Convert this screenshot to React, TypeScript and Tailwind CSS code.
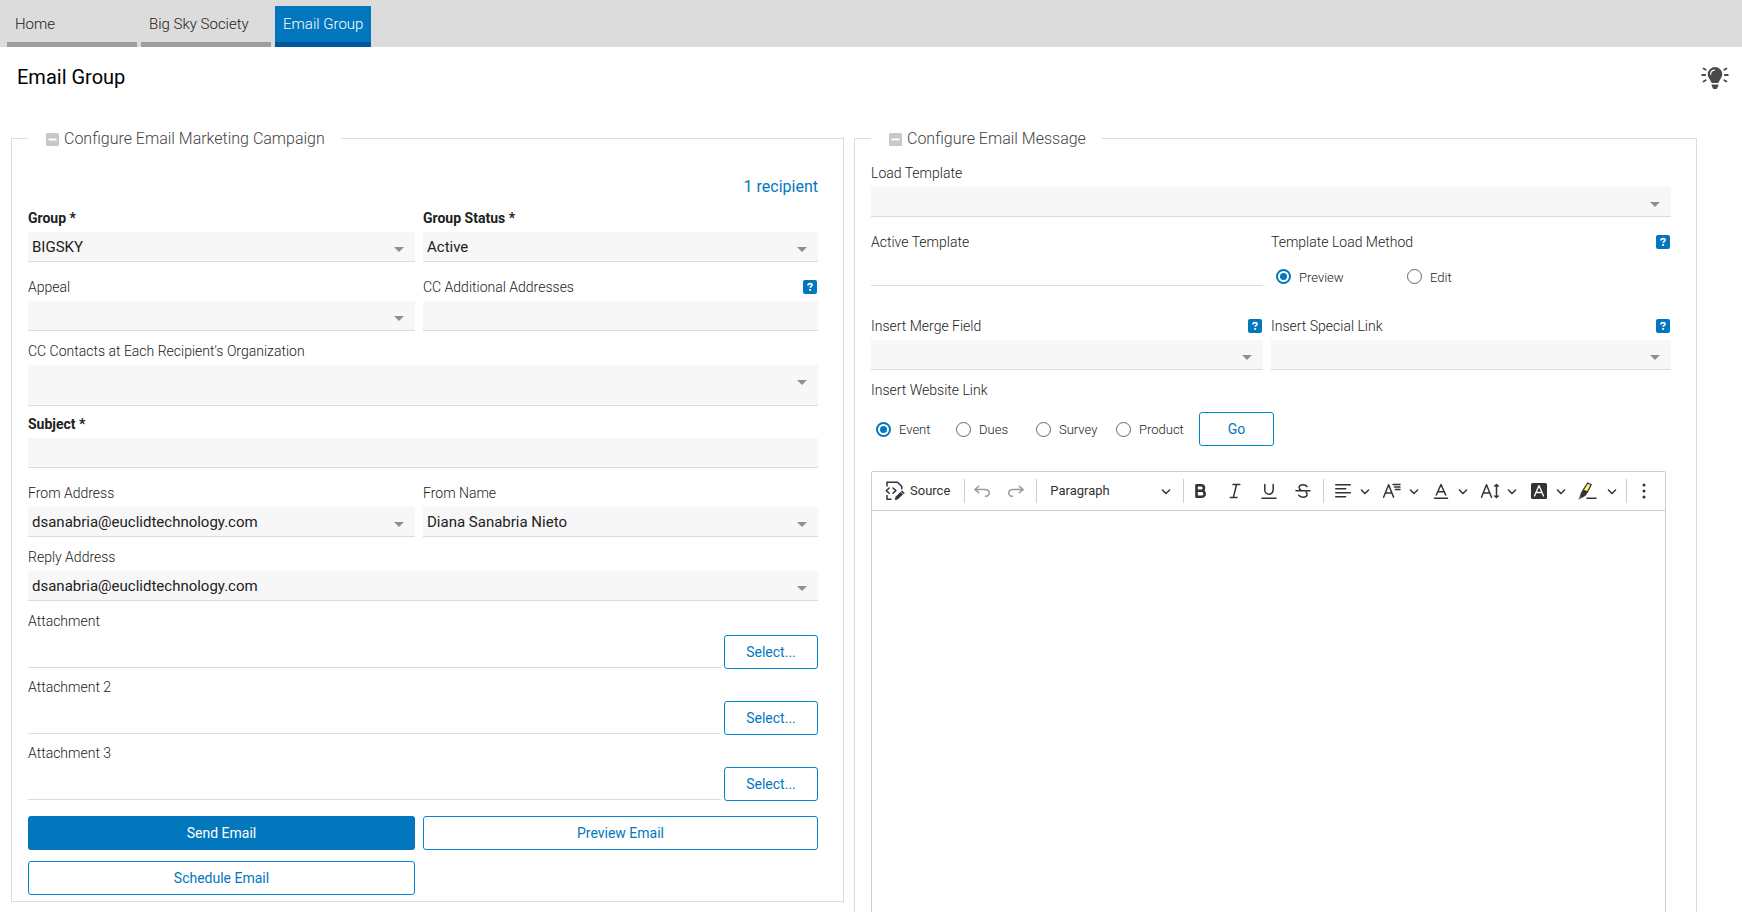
import { useState } from "react";
import type { ReactNode } from "react";

const tabs = [
  { label: "Home", active: false },
  { label: "Big Sky Society", active: false },
  { label: "Email Group", active: true },
];

const linkTypes = ["Event", "Dues", "Survey", "Product"];

const icons = {
  undo: "m5.042 9.367 2.189 1.837a.75.75 0 0 1-.965 1.149l-3.788-3.18a.747.747 0 0 1-.21-.284.75.75 0 0 1 .17-.945L6.23 4.762a.75.75 0 1 1 .964 1.15L4.863 7.866h8.917A.75.75 0 0 1 14 7.9a4 4 0 1 1-1.477 7.718l.344-1.489a2.5 2.5 0 1 0 1.094-4.73l.008-.032H5.042z",
  redo: "m14.958 9.367-2.189 1.837a.75.75 0 0 0 .965 1.149l3.788-3.18a.747.747 0 0 0 .21-.284.75.75 0 0 0-.17-.945L13.77 4.762a.75.75 0 1 0-.964 1.15l2.331 1.955H6.22A.75.75 0 0 0 6 7.9a4 4 0 1 0 1.477 7.718l-.344-1.489A2.5 2.5 0 1 1 6.039 9.4l-.008-.032h8.927z",
  align:
    "M2 3.75c0 .414.336.75.75.75h14.5a.75.75 0 1 0 0-1.5H2.75a.75.75 0 0 0-.75.75zm0 8c0 .414.336.75.75.75h14.5a.75.75 0 1 0 0-1.5H2.75a.75.75 0 0 0-.75.75zm0 4c0 .414.336.75.75.75h9.929a.75.75 0 1 0 0-1.5H2.75a.75.75 0 0 0-.75.75zm0-8c0 .414.336.75.75.75h9.929a.75.75 0 1 0 0-1.5H2.75a.75.75 0 0 0-.75.75z",
};

const Icon = ({ children }: { children: ReactNode }) => (
  <svg
    viewBox="0 0 20 20"
    className="size-5 shrink-0"
    fill="none"
    stroke="currentColor"
    strokeWidth="1.5"
    strokeLinecap="round"
    strokeLinejoin="round"
    aria-hidden="true"
  >
    {children}
  </svg>
);

const PathIcon = ({ d }: { d: string }) => (
  <svg viewBox="0 0 20 20" className="size-5 shrink-0" fill="currentColor" aria-hidden="true">
    <path d={d} />
  </svg>
);

const Chevron = () => (
  <svg viewBox="0 0 10 10" className="size-2.5 shrink-0" fill="currentColor" aria-hidden="true">
    <path d="M.941 4.523a.75.75 0 1 1 1.06-1.06l3.006 3.005 3.005-3.005a.75.75 0 1 1 1.06 1.06l-3.549 3.55a.75.75 0 0 1-1.168-.136L.941 4.523z" />
  </svg>
);

const Help = () => (
  <button
    type="button"
    aria-label="Help"
    className="mt-[3px] mr-px flex size-3.5 items-center justify-center rounded-xs bg-[#0277bd] text-white"
  >
    <svg viewBox="0 0 14 14" className="size-3.5" fill="none" aria-hidden="true">
      <path d="M5 5.4c0-1.1.8-1.7 2-1.7s2 .6 2 1.5c0 1.2-1.8 1.2-1.8 2.6" stroke="currentColor" strokeWidth="1.7" />
      <rect x="6.2" y="9" width="1.9" height="1.8" fill="currentColor" />
    </svg>
  </button>
);

interface FieldProps {
  id: string;
  label: string;
  required?: boolean;
  help?: boolean;
  children: ReactNode;
}

const Field = ({ id, label, required, help, children }: FieldProps) => (
  <div className="min-w-0">
    <div className="flex h-6 items-start justify-between">
      <label htmlFor={id} className={required ? "text-sm font-bold" : "text-sm font-light"}>
        {label}
        {required && " *"}
      </label>
      {help && <Help />}
    </div>
    {children}
  </div>
);

interface SelectFieldProps extends Omit<FieldProps, "children"> {
  value?: string;
  tall?: boolean;
}

const SelectField = ({ value = "", tall, ...field }: SelectFieldProps) => (
  <Field {...field}>
    <div className="relative">
      <select
        id={field.id}
        defaultValue={value}
        className={`block w-full appearance-none border-b border-[#dcdcdc] bg-[#f7f7f7] pt-0.5 pr-8 pl-1 text-[15px] ${
          tall ? "h-[41px]" : "h-[30px]"
        }`}
      >
        <option value={value}>{value}</option>
      </select>
      <svg
        viewBox="0 0 10 5"
        className="pointer-events-none absolute top-[15px] right-[11px] h-[5px] w-2.5"
        fill="#8f8f8f"
        aria-hidden="true"
      >
        <path d="M0 0h10L5 5z" />
      </svg>
    </div>
  </Field>
);

const TextField = ({ plain, ...field }: Omit<FieldProps, "children"> & { plain?: boolean }) => (
  <Field {...field}>
    <input
      id={field.id}
      type="text"
      className={`block h-[30px] w-full border-b border-[#dcdcdc] px-1 text-[15px] ${plain ? "bg-white" : "bg-[#f7f7f7]"}`}
    />
  </Field>
);

const AttachmentField = ({ id, label }: { id: string; label: string }) => (
  <Field id={id} label={label}>
    <div className="flex items-start gap-[3px]">
      <input id={id} type="text" className="h-[33px] min-w-0 flex-1 border-b border-[#dcdcdc] px-1 text-[15px]" />
      <OutlineButton className="w-[94px]">Select...</OutlineButton>
    </div>
  </Field>
);

const OutlineButton = ({ className = "", children }: { className?: string; children: ReactNode }) => (
  <button
    type="button"
    className={`h-[34px] rounded-[3px] border border-[#0288d1] bg-white text-sm text-[#0277bd] ${className}`}
  >
    {children}
  </button>
);

interface RadioProps {
  name: string;
  label: string;
  checked: boolean;
  onChange: () => void;
  className: string;
}

const Radio = ({ name, label, checked, onChange, className }: RadioProps) => (
  <label className={`flex items-center gap-2 text-[13px] font-light ${className}`}>
    <span className="grid size-[15px] shrink-0 place-items-center">
      <input
        type="radio"
        name={name}
        checked={checked}
        onChange={onChange}
        className="col-start-1 row-start-1 size-[15px] appearance-none rounded-full border border-[#666] checked:border-2 checked:border-[#0277bd]"
      />
      {checked && <span className="col-start-1 row-start-1 size-[7px] rounded-full bg-[#0277bd]" />}
    </span>
    <span className="pt-0.5">{label}</span>
  </label>
);

const Panel = ({ title, className, children }: { title: string; className: string; children: ReactNode }) => (
  <fieldset className={`min-w-0 border border-[#dcdcdc] pl-4 ${className}`}>
    <legend className="pr-4 pl-[18px]">
      <button type="button" className="flex h-6 items-center gap-[5px] pt-0.5 text-base font-light text-[#444]">
        <svg viewBox="0 0 13 13" className="size-[13px]" aria-hidden="true">
          <rect width="13" height="13" rx="1.5" fill="#c8c8c8" />
          <rect x="2.5" y="5.5" width="8" height="2" fill="#fff" />
        </svg>
        {title}
      </button>
    </legend>
    {children}
  </fieldset>
);

const ToolButton = ({ label, className, children }: { label: string; className: string; children: ReactNode }) => (
  <button type="button" aria-label={label} className={`flex h-7 shrink-0 items-center ${className}`}>
    {children}
  </button>
);

const Divider = () => <span className="h-6 w-px shrink-0 bg-[#ccced1]" />;

const Editor = () => (
  <div className="mt-[25px] mr-[5px] rounded-t-xs border border-[#ccced1] text-[#333]">
    <div className="flex h-[39px] items-center overflow-hidden border-b border-[#ccced1]">
      <button type="button" className="mr-3.5 ml-[13px] flex h-7 shrink-0 items-center gap-[5px] text-[13px]">
        <Icon>
          <path d="M2 5.5V1.2h10.5l4.3 4.3v2.8M2 14v4.3h4.5" strokeLinecap="butt" />
          <path d="M4.2 7 1.3 9.6l2.9 2.6M8 7l2.9 2.6L8 12.2" />
          <path d="m10.3 18.4.7-2.6 4.6-4.6 2 2-4.6 4.6z" fill="currentColor" strokeWidth=".8" />
          <path d="m16.8 10.2 2 2" />
        </Icon>
        Source
      </button>
      <Divider />
      <ToolButton label="Undo" className="ml-[7px] text-[#9a9a9a]">
        <PathIcon d={icons.undo} />
      </ToolButton>
      <ToolButton label="Redo" className="mr-2.5 ml-3.5 text-[#9a9a9a]">
        <PathIcon d={icons.redo} />
      </ToolButton>
      <Divider />
      <button
        type="button"
        aria-haspopup="listbox"
        className="mr-3 ml-[13px] flex h-7 w-[121px] shrink-0 items-center justify-between text-[13px]"
      >
        Paragraph
        <Chevron />
      </button>
      <Divider />
      <ToolButton label="Bold" className="ml-[7px]">
        <Icon>
          <path d="M5.5 4.2v11.6h5.2a3 3 0 0 0 0-6H5.5m0-5.6h4.7a2.8 2.8 0 0 1 0 5.6" strokeWidth="2.6" />
        </Icon>
      </ToolButton>
      <ToolButton label="Italic" className="ml-3.5">
        <Icon>
          <path d="M8 3.6h6.8M5.3 16.4H12M11.5 3.6 8.4 16.4" />
        </Icon>
      </ToolButton>
      <ToolButton label="Underline" className="ml-3.5">
        <Icon>
          <path d="M3 17.2h14M5.8 3.5V9a4.2 4.2 0 0 0 8.4 0V3.5" />
        </Icon>
      </ToolButton>
      <ToolButton label="Strikethrough" className="mr-2.5 ml-3.5">
        <Icon>
          <path d="M3 9.8h14M14 5.7c-.8-1.4-2.2-2-4-2-2.2 0-3.9 1-3.9 2.9 0 1.5.9 2.3 2.4 3M5.7 14.2c.9 1.4 2.4 2 4.3 2 2.3 0 4-1 4-3 0-.9-.3-1.5-.9-2" />
        </Icon>
      </ToolButton>
      <Divider />
      <ToolButton label="Text alignment" className="ml-[9px] gap-[7px]">
        <PathIcon d={icons.align} />
        <Chevron />
      </ToolButton>
      <ToolButton label="Font family" className="ml-3 gap-[7px]">
        <Icon>
          <path d="m1.6 16.2 5-12.4 5 12.4M3.3 12h6.600M11 3.600h7M12.500 6.100H18M13.500 8.600H18" />
        </Icon>
        <Chevron />
      </ToolButton>
      <ToolButton label="Font color" className="ml-3 gap-[7px]">
        <Icon>
          <path d="M5.300 14 10 3.500 14.700 14M7 10.800h6M3.500 17.200h13" />
        </Icon>
        <Chevron />
      </ToolButton>
      <ToolButton label="Font size" className="ml-3 gap-[7px]">
        <Icon>
          <path d="m1.500 16.200 5-12.400 5 12.400M3.200 12h6.600M16.500 4v12M14.700 5 16.500 3.600 18.300 5M14.700 15l1.800 1.400 1.800-1.400" />
        </Icon>
        <Chevron />
      </ToolButton>
      <ToolButton label="Font background color" className="ml-3 gap-[7px]">
        <Icon>
          <rect x="2" y="2" width="16" height="16" rx="1.500" fill="currentColor" stroke="none" />
          <path d="M5.500 15 10 4.500 14.500 15M7 11.500h6" stroke="#fff" strokeWidth="1.300" />
        </Icon>
        <Chevron />
      </ToolButton>
      <ToolButton label="Highlight" className="ml-3 gap-[9px]">
        <Icon>
          <path d="M5.200 9 9.800 2l3.400 1.800L9.400 11z" fill="#fdfc5a" strokeWidth="1.300" />
          <path d="m3.200 12 1.800-3 4.400 2.200-2 3.300-3 1.600-1.500-1z" fill="currentColor" strokeWidth=".8" />
          <path d="m.9 17.800 1.800-3.300 1.700 1.400z" fill="currentColor" strokeWidth=".5" />
          <path d="M9 17.200h9" />
        </Icon>
        <Chevron />
      </ToolButton>
      <span className="ml-auto" />
      <Divider />
      <ToolButton label="Show more items" className="mr-[11px] ml-[7px]">
        <svg viewBox="0 0 20 20" className="size-5" fill="currentColor" aria-hidden="true">
          <circle cx="10" cy="4" r="1.500" />
          <circle cx="10" cy="10" r="1.500" />
          <circle cx="10" cy="16" r="1.500" />
        </svg>
      </ToolButton>
    </div>
    <div role="textbox" aria-label="Message body" contentEditable suppressContentEditableWarning className="min-h-[480px]" />
  </div>
);

const App = () => {
  const [method, setMethod] = useState("Preview");
  const [linkType, setLinkType] = useState("Event");

  return (
    <div className="h-screen overflow-hidden bg-white font-[Roboto,sans-serif] text-[#212121]">
      <nav className="flex h-[47px] items-end gap-1 bg-[#dcdcdc] pl-[7px]">
        {tabs.map((tab) => (
          <a
            key={tab.label}
            href="#"
            className={`flex h-[41px] items-center border-b-[5px] px-2 text-[15px] font-light ${
              tab.active ? "border-[#01579b] bg-[#0277bd] text-white" : "w-[130px] border-[#9e9e9e]"
            }`}
          >
            {tab.label}
          </a>
        ))}
      </nav>

      <header className="flex h-[79px] items-start justify-between pt-4 pr-[13px] pl-[17px]">
        <h1 className="text-xl text-black">Email Group</h1>
        <button type="button" aria-label="Tips" className="mt-1 text-[#4a4a4a]">
          <svg viewBox="0 0 28 22" className="h-[22px] w-7" fill="none" aria-hidden="true">
            <path
              d="M14 0a7.300 7.300 0 0 0-7.300 7.300c0 3.200 2.200 4.600 3.200 7.200.2.700.6 1.500 1.200 1.500h5.800c.6 0 1-.8 1.200-1.500 1-2.600 3.200-4 3.200-7.200A7.300 7.300 0 0 0 14 0z"
              fill="currentColor"
            />
            <path d="M10.700 17.500h6.600v1.500L15.700 22h-3.400l-1.600-3z" fill="currentColor" />
            <path d="M9.700 7.200c0-2.300 1.500-3.900 3.800-4.100" stroke="#fff" strokeWidth="1.200" strokeLinecap="round" />
            <path
              d="M1.200 8h3M23.800 8h3M2.500 1.500l2.200 1.300M25.500 1.500l-2.200 1.300M2.500 14.500l2.200-1.300M25.500 14.500l-2.200-1.300"
              stroke="currentColor"
              strokeWidth="1.800"
              strokeLinecap="round"
            />
          </svg>
        </button>
      </header>

      <main className="grid grid-cols-[833fr_843fr] items-start gap-2.5 pr-[45px] pl-[11px]">
        <Panel title="Configure Email Marketing Campaign" className="pt-[27px] pr-[25px] pb-1.5">
          <div className="flex h-5 justify-end">
            <a href="#" className="text-base leading-5 text-[#0277bd]">
              1 recipient
            </a>
          </div>
          <div className="mt-[11px] grid grid-cols-[387fr_395fr] gap-x-2 gap-y-[15px]">
            <SelectField id="group" label="Group" required value="BIGSKY" />
            <SelectField id="status" label="Group Status" required value="Active" />
            <SelectField id="appeal" label="Appeal" />
            <TextField id="cc" label="CC Additional Addresses" help />
          </div>
          <div className="mt-2.5">
            <SelectField id="cc-contacts" label="CC Contacts at Each Recipient's Organization" tall />
          </div>
          <div className="mt-2">
            <TextField id="subject" label="Subject" required />
          </div>
          <div className="mt-[15px] grid grid-cols-[387fr_395fr] gap-x-2">
            <SelectField id="from-address" label="From Address" value="dsanabria@euclidtechnology.com" />
            <SelectField id="from-name" label="From Name" value="Diana Sanabria Nieto" />
          </div>
          <div className="mt-2.5">
            <SelectField id="reply" label="Reply Address" value="dsanabria@euclidtechnology.com" />
          </div>
          <div className="mt-2.5 flex flex-col gap-2">
            <AttachmentField id="attachment-1" label="Attachment" />
            <AttachmentField id="attachment-2" label="Attachment 2" />
            <AttachmentField id="attachment-3" label="Attachment 3" />
          </div>
          <div className="mt-[15px] grid grid-cols-[387fr_395fr] gap-x-2 gap-y-[11px]">
            <button type="button" className="h-[34px] rounded-[3px] bg-[#0277bd] text-sm text-white">
              Send Email
            </button>
            <OutlineButton>Preview Email</OutlineButton>
            <OutlineButton>Schedule Email</OutlineButton>
          </div>
        </Panel>

        <Panel title="Configure Email Message" className="pt-[13px] pr-[25px] pb-4">
          <SelectField id="load-template" label="Load Template" />
          <div className="mt-[15px] grid grid-cols-[392fr_400fr] gap-x-2">
            <TextField id="active-template" label="Active Template" plain />
            <div role="radiogroup" aria-label="Template Load Method">
              <div className="flex h-6 items-start justify-between">
                <span className="text-sm font-light">Template Load Method</span>
                <Help />
              </div>
              <div className="flex h-[41px] items-center pl-[5px]">
                {["Preview", "Edit"].map((name) => (
                  <Radio
                    key={name}
                    name="method"
                    label={name}
                    checked={method === name}
                    onChange={() => setMethod(name)}
                    className="w-[131px]"
                  />
                ))}
              </div>
            </div>
          </div>
          <div className="mt-[19px] grid grid-cols-[392fr_400fr] gap-x-2">
            <SelectField id="merge-field" label="Insert Merge Field" help />
            <SelectField id="special-link" label="Insert Special Link" help />
          </div>
          <div role="radiogroup" aria-label="Insert Website Link" className="mt-2.5">
            <div className="h-6 text-sm font-light">Insert Website Link</div>
            <div className="mt-2 flex items-center pl-[5px]">
              {linkTypes.map((name) => (
                <Radio
                  key={name}
                  name="link-type"
                  label={name}
                  checked={linkType === name}
                  onChange={() => setLinkType(name)}
                  className="w-20"
                />
              ))}
              <OutlineButton className="ml-[3px] w-[75px]">Go</OutlineButton>
            </div>
          </div>
          <Editor />
        </Panel>
      </main>
    </div>
  );
};

export default App;
